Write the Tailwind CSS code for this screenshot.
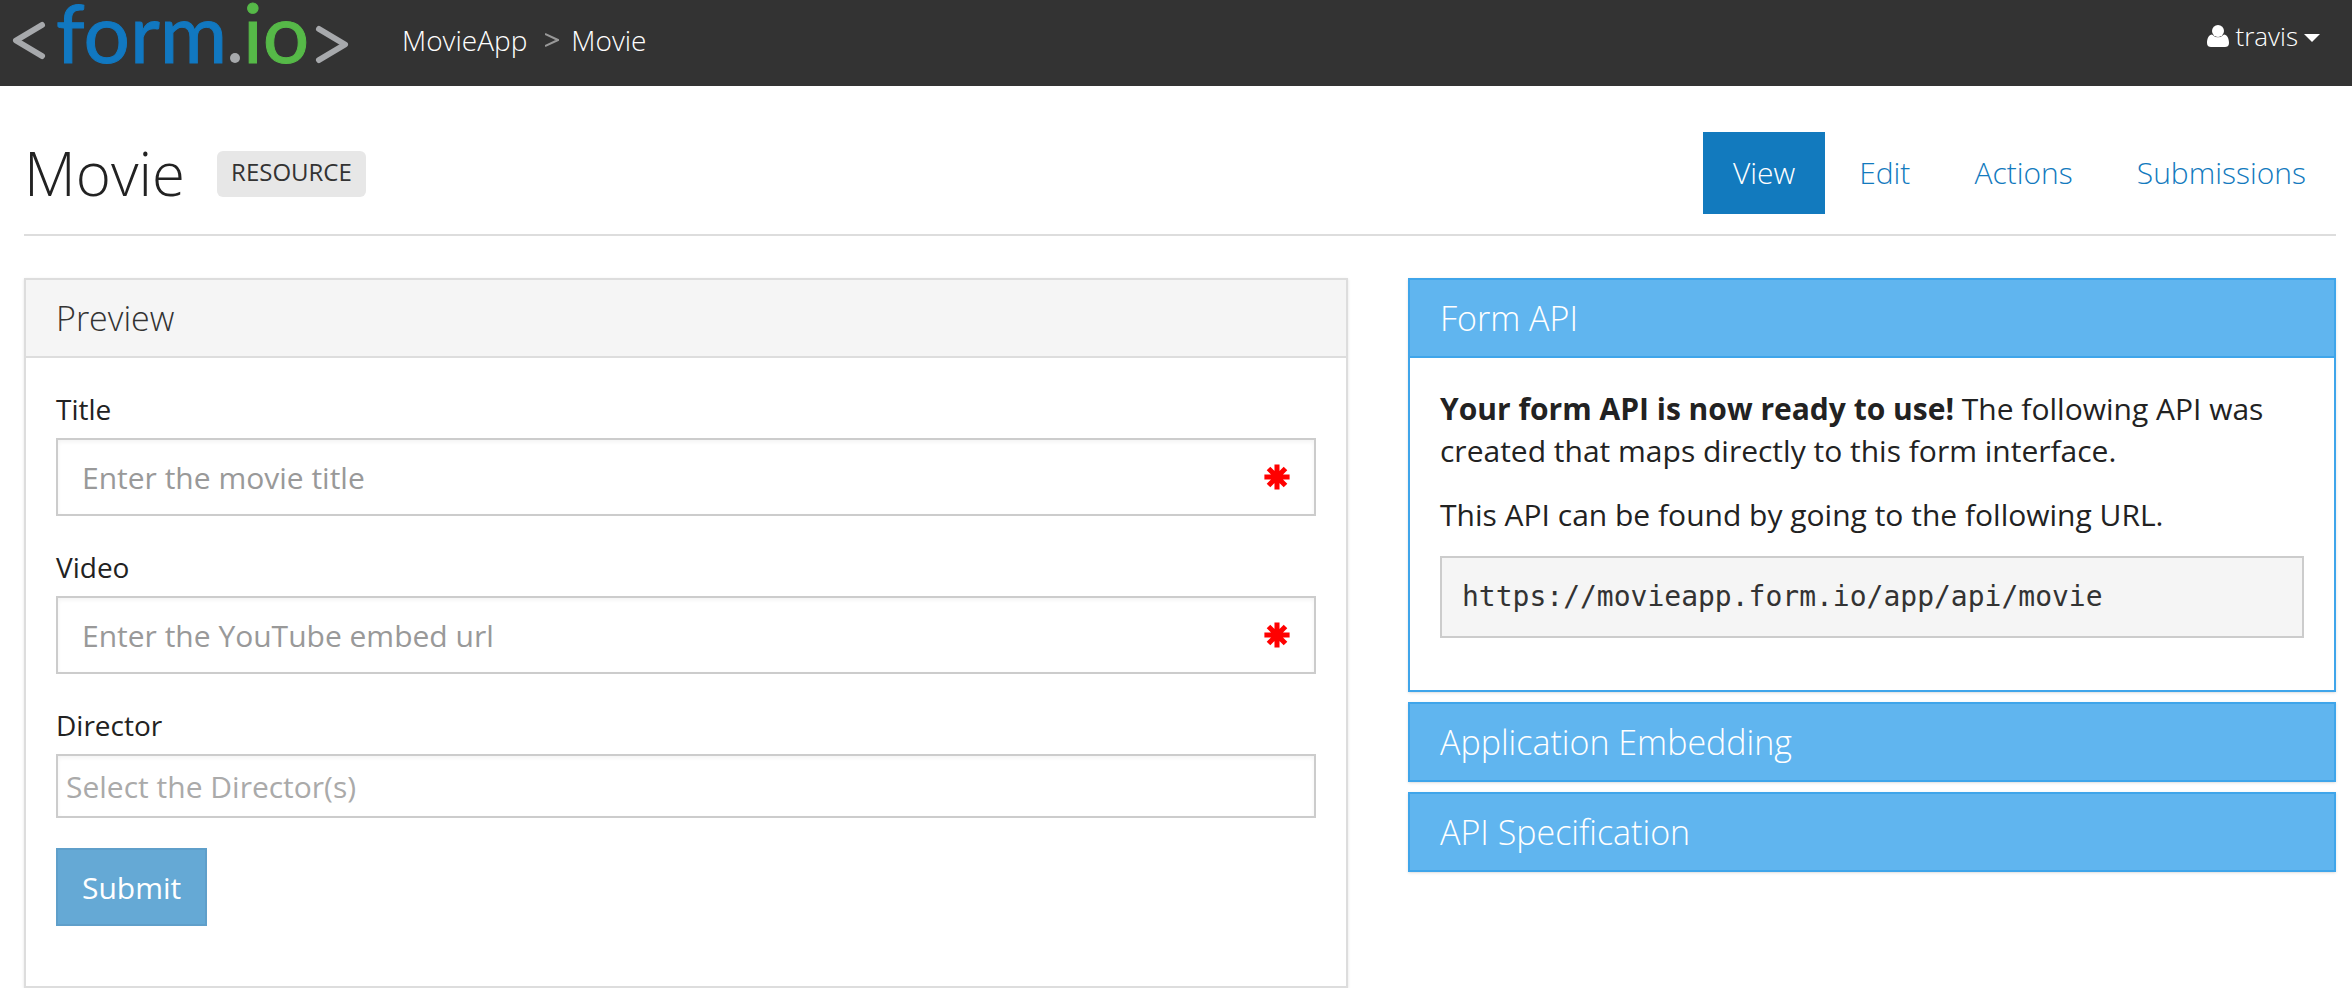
<!DOCTYPE html>
<html lang="en">
<head>
<meta charset="utf-8">
<title>Movie</title>
<script src="https://cdn.jsdelivr.net/npm/@tailwindcss/browser@4"></script>
</head>
<body class="bg-white font-['Open_Sans',sans-serif] text-[#222]">
<svg class="hidden">
  <symbol id="asterisk" viewBox="-13 -13 26 26">
    <path d="M0-12v24M-12 0h24M-8-8l16 16M8-8l-16 16" fill="none" stroke="#f00" stroke-width="6" stroke-linecap="square" transform="scale(.84)"/>
  </symbol>
</svg>
<header class="flex h-[86px] items-start justify-between bg-[#333] pr-8 pl-3 text-white">
  <div class="flex items-start">
    <a href="#" class="flex" aria-label="form.io">
      <svg class="h-[70px] w-[340px] overflow-visible" viewBox="0 0 340 70" font-family="Lato, sans-serif" font-size="82" stroke-width="1">
        <g fill="none" stroke="#a7a9ac" stroke-width="6" stroke-linecap="round" stroke-linejoin="round">
          <path d="M30 25 L4 40.500 L30 56"/>
          <path d="M307 29 L333 44.500 L307 60"/>
        </g>
        <text x="44" y="63" fill="#1178c1" stroke="#1178c1">form</text>
        <circle cx="223" cy="58" r="5" fill="#a7a9ac"/>
        <text x="231" y="63" fill="#56b948" stroke="#56b948">io</text>
      </svg>
    </a>
    <nav aria-label="Breadcrumb" class="ml-[50px] flex items-center pt-[20px] text-[28px] leading-10 font-light">
      <a href="#">MovieApp</a>
      <span class="flex pr-3 pl-[18px]"><svg class="h-3.5 w-3.5" viewBox="0 0 14 14" fill="none" stroke="#999" stroke-width="2" aria-hidden="true"><path d="M0 1 L13 7 L0 13"/></svg></span>
      <a href="#">Movie</a>
    </nav>
  </div>
  <button type="button" class="flex items-center gap-1.5 pt-4 text-[26px] leading-10 font-light">
    <svg class="h-6 w-[22px]" viewBox="0 0 22 24" fill="#fff"><circle cx="11" cy="7" r="6"/><path d="M5 10.500C2 11 0 14 0 19c0 3 2 4 4 4h14c2 0 4-1 4-4 0-5-2-8-5-8.500a8 8 0 0 1-12 0z"/></svg>
    <span>travis</span>
    <svg class="mt-1 h-2 w-4" viewBox="0 0 16 8" fill="#fff"><path d="M0 0h16L8 8z"/></svg>
  </button>
</header>
<main class="px-6 pr-4 pt-[46px]">
  <div class="flex items-start justify-between border-b-2 border-[#ddd] pb-[20px]">
    <div class="flex items-center gap-8">
      <h1 class="text-[60px] leading-[82px] font-light">Movie</h1>
      <span class="mt-0.5 rounded-md bg-[#e7e7e7] px-3.5 pt-0.5 pb-1.5 text-[24px] leading-[38px] text-[#333]">RESOURCE</span>
    </div>
    <nav aria-label="Form" class="flex gap-1 text-[30px] leading-[42px] font-light text-[#127abe]">
      <a href="#" class="bg-[#127abe] px-[30px] py-5 text-white">View</a>
      <a href="#" class="px-[30px] py-5">Edit</a>
      <a href="#" class="px-[30px] py-5">Actions</a>
      <a href="#" class="px-[30px] py-5">Submissions</a>
    </nav>
  </div>
  <div class="mt-[42px] grid grid-cols-[1324fr_928fr] items-start gap-[60px]">
    <section class="border-2 border-[#ddd] shadow-sm">
      <h2 class="border-b-2 border-[#ddd] bg-[#f5f5f5] px-[30px] py-[18px] text-[34px] leading-10 font-light text-[#333]">Preview</h2>
      <form class="px-[30px] pt-[30px] pb-[60px]">
        <label for="title" class="mb-2 block text-[28px] leading-[42px]">Title</label>
        <div class="relative mb-[30px]">
          <input id="title" type="text" placeholder="Enter the movie title" class="block h-[78px] w-full border-2 border-[#ccc] px-6 text-[30px] inset-shadow-sm placeholder:text-[#999]">
          <svg class="absolute top-[26px] right-[26px] size-[26px]" aria-hidden="true"><use href="#asterisk"/></svg>
        </div>
        <label for="video" class="mb-2 block text-[28px] leading-[42px]">Video</label>
        <div class="relative mb-[30px]">
          <input id="video" type="text" placeholder="Enter the YouTube embed url" class="block h-[78px] w-full border-2 border-[#ccc] px-6 text-[30px] inset-shadow-sm placeholder:text-[#999]">
          <svg class="absolute top-[26px] right-[26px] size-[26px]" aria-hidden="true"><use href="#asterisk"/></svg>
        </div>
        <label for="director" class="mb-2 block text-[28px] leading-[42px]">Director</label>
        <input id="director" type="text" placeholder="Select the Director(s)" class="mb-[30px] block h-16 w-full border-2 border-[#ccc] px-2 text-[30px] inset-shadow-sm placeholder:text-[#aaa]">
        <button type="submit" class="block h-[78px] border-2 border-[#5f9fca] bg-[#65a9d5] px-6 text-[30px] text-white">Submit</button>
      </form>
    </section>
    <div class="flex flex-col gap-2.5">
      <section class="border-2 border-[#3fa5ea] shadow-sm">
        <h2 class="border-b-2 border-[#3fa5ea] bg-[#60b5ef] px-[30px] py-[18px] text-[34px] leading-10 font-light text-white">Form API</h2>
        <div class="px-[30px] pt-[30px] pb-[52px] text-[30px] leading-[42px]">
          <p class="mb-[22px]"><strong class="font-bold">Your form API is now ready to use!</strong> The following API was created that maps directly to this form interface.</p>
          <p class="mb-5">This API can be found by going to the following URL.</p>
          <pre class="overflow-x-auto border-2 border-[#ccc] bg-[#f5f5f5] px-5 py-[18px] font-['DejaVu_Sans_Mono',monospace] text-[28px] leading-[42px] text-[#333]">https://movieapp.form.io/app/api/movie</pre>
        </div>
      </section>
      <h2 class="border-2 border-[#3fa5ea] bg-[#60b5ef] px-[30px] py-[18px] text-[34px] leading-10 font-light text-white shadow-sm"><a href="#">Application Embedding</a></h2>
      <h2 class="border-2 border-[#3fa5ea] bg-[#60b5ef] px-[30px] py-[18px] text-[34px] leading-10 font-light text-white shadow-sm"><a href="#">API Specification</a></h2>
    </div>
  </div>
</main>
</body>
</html>
